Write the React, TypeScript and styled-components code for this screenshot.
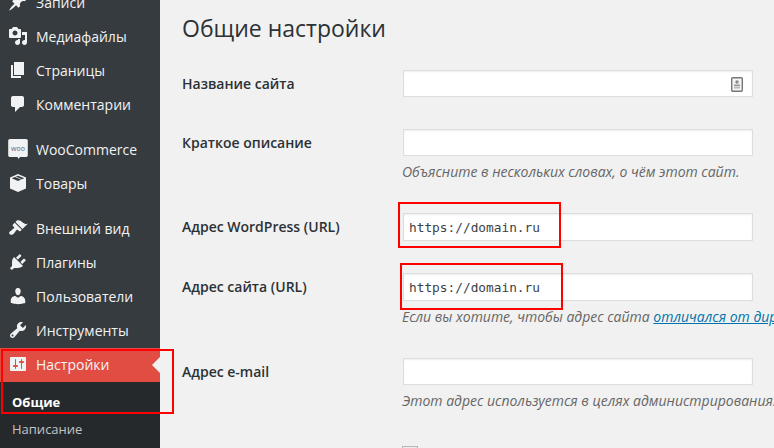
import React, { FC } from 'react';
import styled, { createGlobalStyle } from 'styled-components';

const GlobalStyle = createGlobalStyle`
    html, body {
        margin: 0;
        padding: 0;
        height: 100%;
        overflow: hidden;
        background: #f1f1f1;
    }
    * {
        box-sizing: border-box;
    }
`

const PageStyle = styled.div`
    position: relative;
    display: flex;
    width: 774px;
    height: 448px;
    overflow: hidden;
    font-family: "Open Sans", sans-serif;
    color: #2c3136;
`

const SidebarStyle = styled.nav`
    flex: 0 0 160px;
    height: 448px;
    background: #363b3f;
    overflow: hidden;
`

const MenuListStyle = styled.div`
    margin-top: -14px;
`

const MenuItemStyle = styled.div<{ $active?: boolean; $gap?: boolean }>`
    position: relative;
    display: flex;
    align-items: center;
    gap: 8px;
    height: 34px;
    padding: 0 0 2px 8px;
    margin-top: ${p => (p.$gap ? '11px' : '0')};
    font-size: 14px;
    color: #f1f2f3;
    background: ${p => (p.$active ? '#e14d43' : 'transparent')};
`

const IconStyle = styled.svg`
    flex: 0 0 20px;
    width: 20px;
    height: 20px;
    fill: #f1f2f3;
`

const MenuArrowStyle = styled.span`
    position: absolute;
    right: 0;
    top: 50%;
    margin-top: -8px;
    border: 8px solid transparent;
    border-left-width: 0;
    border-right-color: #f1f1f1;
`

const SubMenuStyle = styled.div`
    padding-top: 7px;
    height: 70px;
    background: #26292c;
`

const SubItemStyle = styled.div<{ $current?: boolean }>`
    height: ${p => (p.$current ? '27px' : '26px')};
    line-height: 26px;
    padding-left: 12px;
    font-size: 13px;
    font-weight: ${p => (p.$current ? 700 : 400)};
    color: ${p => (p.$current ? '#ffffff' : '#c3c4c5')};
`

const MainStyle = styled.main`
    flex: 1;
    min-width: 0;
    padding-left: 22px;
`

const TitleStyle = styled.h1`
    margin: 0;
    height: 54px;
    padding-top: 10px;
    font-size: 23px;
    line-height: 36px;
    font-weight: 400;
`

const RowStyle = styled.div`
    display: grid;
    grid-template-columns: 221px 350px;
    padding: 16px 0;
`

const LabelStyle = styled.label`
    height: 27px;
    font-size: 14px;
    font-weight: 600;
    line-height: 27px;
`

const FieldStyle = styled.div`
    position: relative;
    min-width: 0;
`

const TextInputStyle = styled.input<{ $height: number }>`
    display: block;
    width: 350px;
    height: ${p => p.$height}px;
    padding: 1px 5px 0;
    border: 1px solid #ddd;
    box-shadow: inset 0 1px 2px rgba(0, 0, 0, 0.07);
    background: #fff;
    outline: none;
    font-family: "DejaVu Sans Mono", monospace;
    font-size: 12.8px;
    color: #3c4247;
`

const DescriptionStyle = styled.p`
    margin: 0 0 0 -1px;
    height: 25px;
    line-height: 31px;
    width: 400px;
    font-size: 14px;
    font-style: italic;
    white-space: nowrap;
    color: #666;

    & > a {
        color: #0073aa;
        text-decoration: underline;
    }
`

const ContactIconStyle = styled.svg`
    position: absolute;
    top: 7px;
    right: 10px;
    width: 12px;
    height: 15px;
`

const CheckboxStyle = styled.input`
    appearance: none;
    display: block;
    width: 16px;
    height: 16px;
    margin: 4px 0 0 -1px;
    border: 1px solid #b4b9be;
    background: #fff;
    box-shadow: inset 0 1px 2px rgba(0, 0, 0, 0.1);
`

const HighlightStyle = styled.div<{ $left: number; $top: number; $width: number; $height: number }>`
    position: absolute;
    left: ${p => p.$left}px;
    top: ${p => p.$top}px;
    width: ${p => p.$width}px;
    height: ${p => p.$height}px;
    border: 2px solid #ff0000;
    pointer-events: none;
`

const icons: { [key: string]: string } = {
    post: 'M10.44 3.02l1.82-1.82 6.36 6.35-1.83 1.82c-1.05-.68-2.48-.57-3.41.36l-.75.75c-.92.93-1.04 2.35-.35 3.41l-1.83 1.82-2.41-2.41-2.8 2.79c-.42.42-3.38 2.71-3.8 2.29s1.86-3.39 2.28-3.81l2.79-2.79L4.1 9.36l1.83-1.82c1.05.69 2.48.57 3.4-.36l.75-.75c.93-.92 1.05-2.35.36-3.41z',
    media: 'M13 11V4c0-.55-.45-1-1-1h-1.67L9 1H5L3.67 3H2c-.55 0-1 .45-1 1v7c0 .55.45 1 1 1h10c.55 0 1-.45 1-1zM7 4.5c1.38 0 2.5 1.12 2.5 2.5S8.38 9.5 7 9.5 4.5 8.38 4.5 7 5.62 4.5 7 4.5zM14 6h5v10.5c0 1.38-1.12 2.5-2.5 2.5S14 17.88 14 16.5s1.12-2.5 2.5-2.5c.17 0 .34.02.5.05V9h-3V6zm-4 8.05V13h2v3.5c0 1.38-1.12 2.5-2.5 2.5S7 17.88 7 16.5 8.12 14 9.5 14c.17 0 .34.02.5.05z',
    page: 'M6 15V2h10v13H6zm-1 1h8v2H3V5h2v11z',
    comments: 'M5 2h9c1.1 0 2 .9 2 2v7c0 1.1-.9 2-2 2h-2l-5 5v-5H5c-1.1 0-2-.9-2-2V4c0-1.1.9-2 2-2z',
    products: 'M10 1l8 3.400v11L10 19l-8-3.600v-11L10 1zM3.800 5.300L10 8l6.200-2.700L10 2.800 3.800 5.300zM7 4l6 2.600.8-.4-6-2.600-.8.4z',
    appearance: 'M14.48 11.06L7.41 3.99l1.5-1.5c.5-.56 2.3-.47 3.51.32 1.21.8 1.43 1.28 2.91 2.1 1.18.64 2.45 1.26 4.45.85zm-.71.71L6.7 4.7 4.93 6.47c-.39.39-.39 1.02 0 1.41l1.06 1.06c.39.39.39 1.03 0 1.42-.6.6-1.43 1.11-2.21 1.69-.35.26-.7.53-1.01.84C1.43 13.23.4 14.75 1.8 16.15c1.41 1.41 2.92.38 4.26-.97.31-.31.58-.66.84-1.01.58-.78 1.09-1.61 1.69-2.21.39-.39 1.02-.39 1.41 0l1.06 1.06c.39.39 1.02.39 1.41 0z',
    plugins: 'M13.11 4.36L9.87 7.6 8 5.73l3.24-3.24c.35-.34 1.05-.2 1.56.32.52.51.66 1.21.31 1.55zm-8 1.77l.91-1.12 9.01 9.01-1.19.84c-.71.71-2.63 1.16-3.82 1.16H6.14L4.9 17.26c-.59.59-1.54.59-2.12 0-.59-.58-.59-1.53 0-2.12l1.24-1.24v-3.88c0-1.13.4-3.19 1.09-3.89zm7.26 3.97l3.24-3.24c.34-.35 1.04-.21 1.55.31.52.51.66 1.21.31 1.55l-3.24 3.25z',
    users: 'M10 9.25c-2.27 0-2.73-3.44-2.73-3.44C7 4.02 7.82 2 9.97 2c2.16 0 2.98 2.02 2.71 3.81 0 0-.41 3.44-2.68 3.44zm0 2.57L12.72 10c2.39 0 4.52 2.33 4.52 4.53v2.49s-3.65 1.13-7.24 1.13c-3.65 0-7.24-1.13-7.24-1.13v-2.49c0-2.25 1.94-4.48 4.47-4.48z',
    tools: 'M16.68 9.77c-1.34 1.34-3.3 1.67-4.95.99l-5.41 6.52c-.99.99-2.59.99-3.58 0s-.99-2.59 0-3.57l6.52-5.42c-.68-1.65-.35-3.61.99-4.95 1.28-1.28 3.12-1.62 4.72-1.06l-2.89 2.89 2.82 2.82 2.86-2.87c.53 1.58.18 3.39-1.08 4.65zM3.81 16.21c.4.39 1.04.39 1.43 0 .4-.4.4-1.04 0-1.43-.39-.4-1.03-.4-1.43 0-.39.39-.39 1.03 0 1.43z',
    settings: 'M18 16V4c0-.55-.45-1-1-1H3c-.55 0-1 .45-1 1v12c0 .55.45 1 1 1h14c.55 0 1-.45 1-1zM8 11h1c.55 0 1 .45 1 1s-.45 1-1 1H8v1.5c0 .28-.22.5-.5.5s-.5-.22-.5-.5V13H6c-.55 0-1-.45-1-1s.45-1 1-1h1V5.5c0-.28.22-.5.5-.5s.5.22.5.5V11zm5-2h-1c-.55 0-1-.45-1-1s.45-1 1-1h1V5.5c0-.28.22-.5.5-.5s.5.22.5.5V7h1c.55 0 1 .45 1 1s-.45 1-1 1h-1v5.5c0 .28-.22.5-.5.5s-.5-.22-.5-.5V9z',
}

const MenuIcon: FC<{ name: string }> = ({ name }) => (
    <IconStyle viewBox="0 0 20 20">
        <path fillRule="evenodd" d={icons[name]} />
    </IconStyle>
)

const WooIcon: FC = () => (
    <IconStyle viewBox="0 0 20 20">
        <path d="M2 0h16c1 0 1.800.8 1.800 1.800v14.400c0 1-.8 1.800-1.800 1.800h-6l-1.500 2-1-2H2c-1 0-1.800-.8-1.800-1.800V1.800C.2.800 1 0 2 0z" />
        <text x="10" y="11.500" textAnchor="middle" fontSize="7" fontFamily="Open Sans, sans-serif" fill="#5f6380">woo</text>
    </IconStyle>
)

const menuTop = [
    { icon: 'post', text: 'Записи' },
    { icon: 'media', text: 'Медиафайлы' },
    { icon: 'page', text: 'Страницы' },
    { icon: 'comments', text: 'Комментарии' },
]

const menuBottom = [
    { icon: 'appearance', text: 'Внешний вид' },
    { icon: 'plugins', text: 'Плагины' },
    { icon: 'users', text: 'Пользователи' },
    { icon: 'tools', text: 'Инструменты' },
]

const App: FC = () => {
    return <PageStyle>
        <GlobalStyle />
        <SidebarStyle>
            <MenuListStyle>
                {menuTop.map(item =>
                    <MenuItemStyle key={item.icon}>
                        <MenuIcon name={item.icon} />
                        {item.text}
                    </MenuItemStyle>
                )}
                <MenuItemStyle $gap>
                    <WooIcon />
                    WooCommerce
                </MenuItemStyle>
                <MenuItemStyle>
                    <MenuIcon name="products" />
                    Товары
                </MenuItemStyle>
                {menuBottom.map((item, i) =>
                    <MenuItemStyle key={item.icon} $gap={i === 0}>
                        <MenuIcon name={item.icon} />
                        {item.text}
                    </MenuItemStyle>
                )}
                <MenuItemStyle $active>
                    <MenuIcon name="settings" />
                    Настройки
                    <MenuArrowStyle />
                </MenuItemStyle>
                <SubMenuStyle>
                    <SubItemStyle $current>Общие</SubItemStyle>
                    <SubItemStyle>Написание</SubItemStyle>
                </SubMenuStyle>
            </MenuListStyle>
        </SidebarStyle>
        <MainStyle>
            <TitleStyle>Общие настройки</TitleStyle>
            <RowStyle>
                <LabelStyle>Название сайта</LabelStyle>
                <FieldStyle>
                    <TextInputStyle $height={27} readOnly />
                    <ContactIconStyle viewBox="0 0 12 15">
                        <rect x="0.7" y="0.7" width="10.600" height="13.600" rx="1" fill="#f4f4f4" stroke="#777" strokeWidth="1.400" />
                        <circle cx="6" cy="5" r="1.700" fill="#888" />
                        <rect x="3" y="7.500" width="6" height="1.800" fill="#999" />
                        <rect x="3" y="10" width="6" height="1.500" fill="#bbb" />
                    </ContactIconStyle>
                </FieldStyle>
            </RowStyle>
            <RowStyle>
                <LabelStyle>Краткое описание</LabelStyle>
                <FieldStyle>
                    <TextInputStyle $height={27} readOnly />
                    <DescriptionStyle>Объясните в нескольких словах, о чём этот сайт.</DescriptionStyle>
                </FieldStyle>
            </RowStyle>
            <RowStyle>
                <LabelStyle>Адрес WordPress (URL)</LabelStyle>
                <FieldStyle>
                    <TextInputStyle $height={28} value="https://domain.ru" readOnly />
                </FieldStyle>
            </RowStyle>
            <RowStyle>
                <LabelStyle>Адрес сайта (URL)</LabelStyle>
                <FieldStyle>
                    <TextInputStyle $height={28} value="https://domain.ru" readOnly />
                    <DescriptionStyle>
                        Если вы хотите, чтобы адрес сайта <a href="#">отличался от директории установки WordPress</a>
                    </DescriptionStyle>
                </FieldStyle>
            </RowStyle>
            <RowStyle>
                <LabelStyle>Адрес e-mail</LabelStyle>
                <FieldStyle>
                    <TextInputStyle $height={27} readOnly />
                    <DescriptionStyle>Этот адрес используется в целях администрирования.</DescriptionStyle>
                </FieldStyle>
            </RowStyle>
            <RowStyle>
                <LabelStyle />
                <FieldStyle>
                    <CheckboxStyle type="checkbox" />
                </FieldStyle>
            </RowStyle>
        </MainStyle>
        <HighlightStyle $left={1} $top={349} $width={173} $height={65} />
        <HighlightStyle $left={398} $top={202} $width={163} $height={46} />
        <HighlightStyle $left={400} $top={263} $width={163} $height={47} />
    </PageStyle>
}

export default App
